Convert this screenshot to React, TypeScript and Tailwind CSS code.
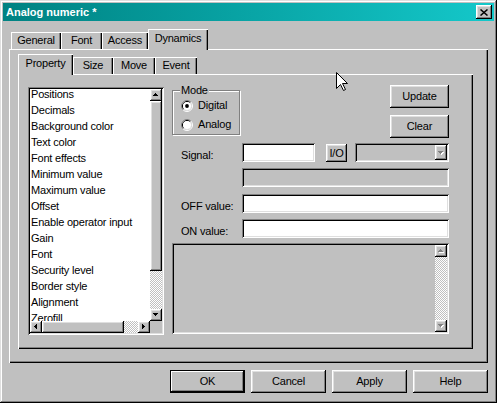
import React from 'react'

// win classic bevels
const raised = 'shadow-[inset_-1px_-1px_#000,inset_1px_1px_#fff,inset_-2px_-2px_#808080,inset_2px_2px_#dfdfdf]'
const sunken = 'shadow-[inset_1px_1px_#808080,inset_-1px_-1px_#fff,inset_2px_2px_#000,inset_-2px_-2px_#dfdfdf]'
const panel = 'shadow-[inset_1px_1px_#fff,inset_-1px_-1px_#000,inset_-2px_-2px_#808080]'
const frame = 'shadow-[inset_-1px_-1px_#000,inset_1px_1px_#dfdfdf,inset_-2px_-2px_#808080,inset_2px_2px_#fff]'
const checker = 'bg-[repeating-conic-gradient(#fff_0%_25%,#c0c0c0_0%_50%)] bg-[length:2px_2px]'

type Dir = 'up' | 'down' | 'left' | 'right'

const items = [
  'Positions',
  'Decimals',
  'Background color',
  'Text color',
  'Font effects',
  'Minimum value',
  'Maximum value',
  'Offset',
  'Enable operator input',
  'Gain',
  'Font',
  'Security level',
  'Border style',
  'Alignment',
  'Zerofill',
]

function Arrow({ dir, disabled }: { dir: Dir; disabled?: boolean }) {
  const vertical = dir === 'up' || dir === 'down'
  const px = (dx: number, dy: number, color: string) =>
    [0, 1, 2].map(i => {
      if (dir === 'up') return <rect key={color + i} x={2 - i + dx} y={i + dy} width={1 + 2 * i} height={1} fill={color} />
      if (dir === 'down') return <rect key={color + i} x={2 - i + dx} y={2 - i + dy} width={1 + 2 * i} height={1} fill={color} />
      if (dir === 'left') return <rect key={color + i} x={i + dx} y={2 - i + dy} width={1} height={1 + 2 * i} fill={color} />
      return <rect key={color + i} x={2 - i + dx} y={2 - i + dy} width={1} height={1 + 2 * i} fill={color} />
    })
  return (
    <svg width={vertical ? 6 : 4} height={vertical ? 4 : 6} shapeRendering="crispEdges">
      {disabled && px(1, 1, '#fff')}
      {px(0, 0, disabled ? '#808080' : '#000')}
    </svg>
  )
}

function ScrollBtn({ dir, disabled }: { dir: Dir; disabled?: boolean }) {
  return (
    <div className={`w-[12px] h-[12px] shrink-0 bg-[#c0c0c0] flex items-center justify-center ${raised}`}>
      <Arrow dir={dir} disabled={disabled} />
    </div>
  )
}

function Tab({ w, active, children }: { w: string; active?: boolean; children: React.ReactNode }) {
  if (active) {
    return (
      <div className={`${w} h-[21px] bg-[#c0c0c0] flex justify-center pt-[3px] leading-[13px] shadow-[inset_1px_1px_#fff,inset_-1px_0_#000,inset_-2px_0_#808080]`}>
        {children}
      </div>
    )
  }
  return (
    <div className={`${w} h-[17px] mt-[3px] flex items-center justify-center leading-[13px] shadow-[inset_1px_1px_#fff,inset_-1px_0_#000,inset_-2px_0_#808080]`}>
      {children}
    </div>
  )
}

function Button({ className, children }: { className: string; children: React.ReactNode }) {
  return (
    <div className={`${className} bg-[#c0c0c0] flex items-center justify-center leading-[13px] ${raised}`}>
      {children}
    </div>
  )
}

function Radio({ checked }: { checked?: boolean }) {
  return (
    <svg width="12" height="12" viewBox="0 0 12 12">
      <path d="M2.11 9.89 A5.5 5.5 0 0 1 9.89 2.11" stroke="#808080" fill="none" />
      <path d="M9.89 2.11 A5.5 5.5 0 0 1 2.11 9.89" stroke="#fff" fill="none" />
      <path d="M2.82 9.18 A4.5 4.5 0 0 1 9.18 2.82" stroke="#000" fill="none" />
      <path d="M9.18 2.82 A4.5 4.5 0 0 1 2.82 9.18" stroke="#dfdfdf" fill="none" />
      <circle cx="6" cy="6" r="4" fill="#fff" />
      {checked && <circle cx="6" cy="6" r="1.9" fill="#000" />}
    </svg>
  )
}

function TitleBar() {
  return (
    <div className="h-[18px] shrink-0 flex items-center justify-between pl-[3px] pr-[2px] bg-linear-to-r from-[#008282] to-[#14c8ca]">
      <span className="text-white font-bold text-[11px] tracking-normal leading-[13px]">Analog numeric *</span>
      <div className={`w-[16px] h-[14px] bg-[#c0c0c0] flex items-center justify-center ${raised}`}>
        <svg width="8" height="7" viewBox="0 0 8 7">
          <path d="M0.5 0.5 L7.5 6.5 M7.5 0.5 L0.5 6.5" stroke="#000" strokeWidth="1.5" />
        </svg>
      </div>
    </div>
  )
}

function PropertyList() {
  return (
    <div className={`mt-[2px] w-[136px] h-[248px] p-[2px] bg-white ${sunken}`}>
      <div className="grid h-full grid-cols-[1fr_12px] grid-rows-[1fr_12px]">
        <div className="overflow-hidden">
          <ul className="-mt-[3px]">
            {items.map(item => (
              <li key={item} className="h-[16px] leading-[16px] pl-[1px] whitespace-nowrap">{item}</li>
            ))}
          </ul>
        </div>
        <div className="flex flex-col">
          <ScrollBtn dir="up" />
          <div className={`h-[170px] shrink-0 bg-[#c0c0c0] ${raised}`} />
          <div className={`flex-1 ${checker}`} />
          <ScrollBtn dir="down" />
        </div>
        <div className="flex">
          <ScrollBtn dir="left" />
          <div className={`w-[82px] shrink-0 bg-[#c0c0c0] ${raised}`} />
          <div className={`flex-1 ${checker}`} />
          <ScrollBtn dir="right" />
        </div>
        <div className="bg-[#c0c0c0]" />
      </div>
    </div>
  )
}

function ModeGroup() {
  return (
    <div className="relative mt-[5px] w-[68px] h-[45px] border border-[#808080] shadow-[inset_1px_1px_#fff,1px_1px_#fff] pt-[5px] pl-[8px]">
      <span className="absolute -top-[7px] left-[7px] px-[1px] bg-[#c0c0c0] leading-[13px]">Mode</span>
      <div className="h-[19px] flex items-center gap-[5px] leading-[13px]">
        <Radio checked />
        <span>Digital</span>
      </div>
      <div className="h-[19px] flex items-center gap-[5px] leading-[13px]">
        <Radio />
        <span>Analog</span>
      </div>
    </div>
  )
}

function Cursor() {
  return (
    <svg className="absolute left-[336px] top-[72px]" width="13" height="20" viewBox="0 0 13 20">
      <path d="M0.5 0.5 L0.5 16.5 L4.5 12.5 L7.5 18.5 L9.5 17.5 L6.5 11.5 L11.5 11.5 Z" fill="#fff" stroke="#000" strokeLinejoin="miter" />
    </svg>
  )
}

export default function App() {
  return (
    <div className={`relative w-[497px] h-[403px] overflow-hidden bg-[#c0c0c0] p-[3px] flex flex-col text-[11px] tracking-[-0.2px] text-black font-['Liberation_Sans',Arial,sans-serif] ${frame}`}>
      <TitleBar />

      <div className="flex flex-col px-[6px]">
        <div className="mt-[8px] relative z-10 flex items-start h-[20px] pl-[2px]">
          <Tab w="w-[50px]">General</Tab>
          <Tab w="w-[41px]">Font</Tab>
          <Tab w="w-[46px]">Access</Tab>
          <Tab w="w-[60px]" active>Dynamics</Tab>
        </div>

        <div className={`h-[314px] pt-[5px] pl-[9px] pr-[15px] pb-[14px] flex flex-col ${panel}`}>
          <div className="relative z-10 flex items-start h-[20px] shrink-0">
            <Tab w="w-[55px]" active>Property</Tab>
            <Tab w="w-[40px]">Size</Tab>
            <Tab w="w-[42px]">Move</Tab>
            <Tab w="w-[42px]">Event</Tab>
          </div>

          <div className={`flex-1 flex items-start pt-[11px] pl-[10px] ${panel}`}>
            <PropertyList />

            <div className="ml-[8px] w-[277px] flex flex-col">
              <div className="flex justify-between h-[53px]">
                <ModeGroup />
                <div className="flex flex-col gap-[7px] w-[59px]">
                  <Button className="h-[23px]">Update</Button>
                  <Button className="h-[23px]">Clear</Button>
                </div>
              </div>

              <div className="mt-[5px] flex h-[19px]">
                <span className="w-[70px] shrink-0 pl-[9px] self-end leading-[13px]">Signal:</span>
                <div className={`w-[73px] bg-white ${sunken}`} />
                <Button className="ml-[11px] mt-[1px] w-[21px] h-[18px]">I/O</Button>
                <div className={`ml-[8px] w-[94px] p-[2px] flex justify-end ${sunken}`}>
                  <div className={`w-[12px] h-full bg-[#c0c0c0] flex items-center justify-center ${raised}`}>
                    <Arrow dir="down" disabled />
                  </div>
                </div>
              </div>

              <div className={`mt-[6px] ml-[70px] h-[19px] ${sunken}`} />

              <div className="mt-[7px] flex h-[19px]">
                <span className="w-[70px] shrink-0 pl-[9px] self-end leading-[13px]">OFF value:</span>
                <div className={`flex-1 bg-white ${sunken}`} />
              </div>

              <div className="mt-[6px] flex h-[19px]">
                <span className="w-[70px] shrink-0 pl-[9px] self-end leading-[13px]">ON value:</span>
                <div className={`flex-1 bg-white ${sunken}`} />
              </div>

              <div className={`mt-[5px] h-[91px] p-[2px] flex justify-end ${sunken}`}>
                <div className="w-[12px] flex flex-col">
                  <ScrollBtn dir="up" disabled />
                  <div className={`flex-1 ${checker}`} />
                  <ScrollBtn dir="down" disabled />
                </div>
              </div>
            </div>
          </div>
        </div>

        <div className="mt-[7px] flex justify-end gap-[6px]">
          <div className="w-[75px] h-[23px] flex items-center justify-center leading-[13px] shadow-[inset_0_0_0_1px_#000,inset_-2px_-2px_#000,inset_2px_2px_#fff,inset_-3px_-3px_#808080]">
            OK
          </div>
          <Button className="w-[75px] h-[23px]">Cancel</Button>
          <Button className="w-[75px] h-[23px]">Apply</Button>
          <Button className="w-[75px] h-[23px]">Help</Button>
        </div>
      </div>

      <Cursor />
    </div>
  )
}
